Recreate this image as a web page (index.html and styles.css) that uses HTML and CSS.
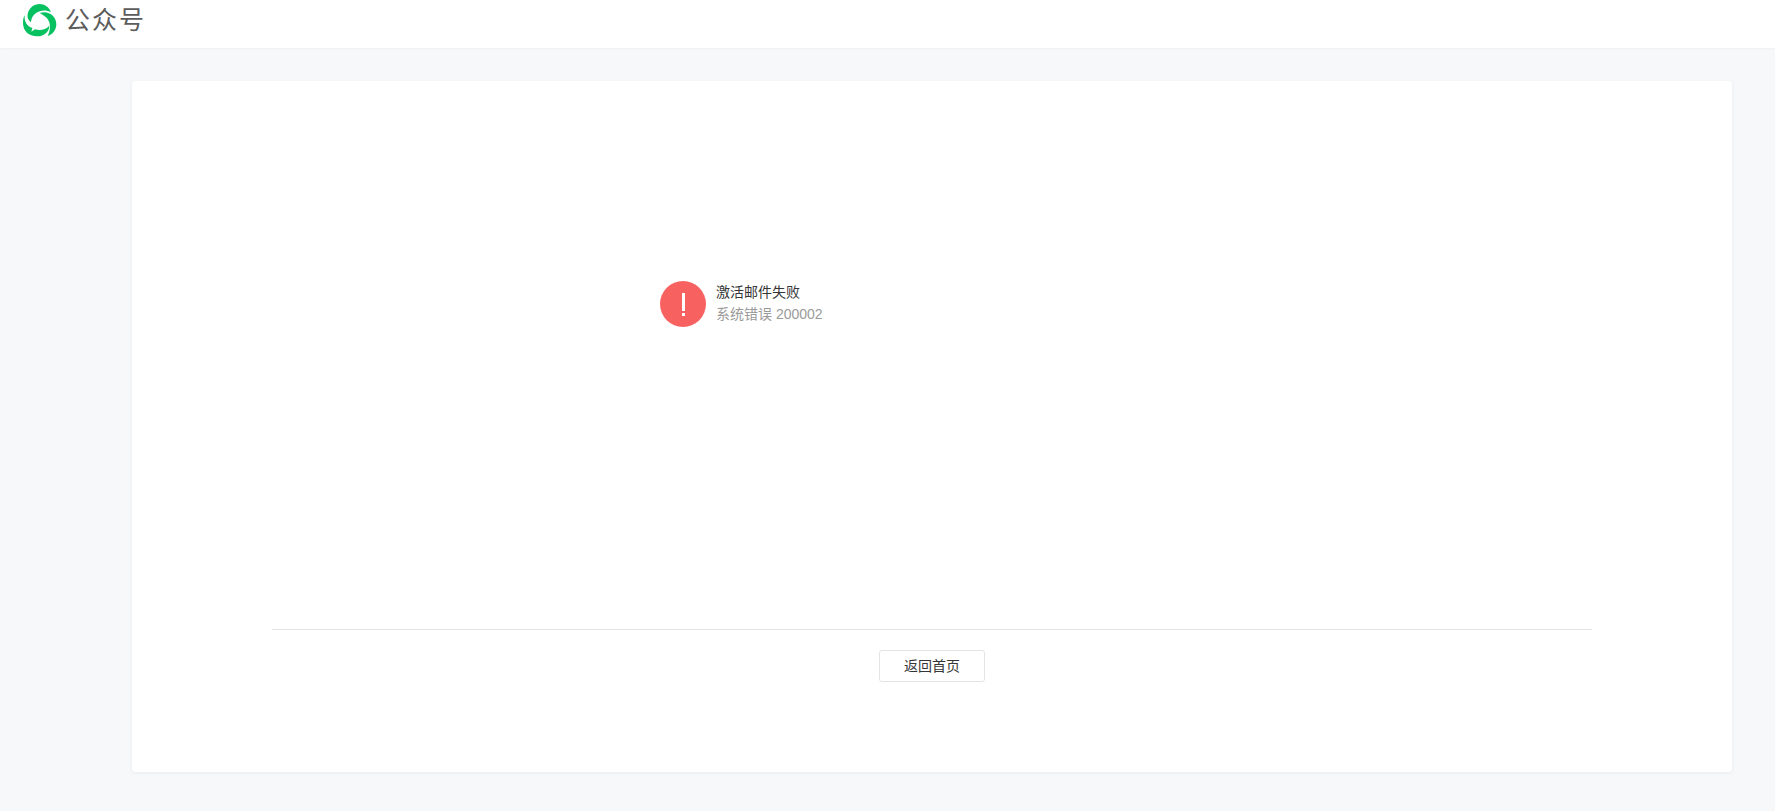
FILE: index.html
```
<!DOCTYPE html>
<html lang="zh-CN">
<head>
    <meta charset="UTF-8">
    <title>公众号</title>
    <link rel="stylesheet" href="styles.css">
</head>
<body>
<header class="head">
    <a class="logo" href="#">
        <svg class="logo_icon" viewBox="0 0 102 99">
            <path d="M24 55C15 49 12 39 14 30C18 12 32 0 50 0C65 0 78 9 84 24C74 19 62 18 53 21C36 25 25 38 24 55Z"/>
            <path d="M50 27C76 18 100 36 100 61C100 77 90 91 74 96C84 77 85 48 64 36C60 33 56 30 50 27Z"/>
            <path d="M5 34C3 53 13 68 28 72L25 83L36 76C53 80 68 77 79 65C79 85 61 97 42 97C18 97 0 81 0 57C0 48 1 41 5 34Z"/>
        </svg>
        <span class="logo_text">公众号</span>
    </a>
</header>
<main class="main">
    <div class="msg">
        <svg class="msg_icon" viewBox="0 0 46 46">
            <circle cx="23" cy="23" r="23" fill="#f76260"/>
            <path d="M22 12h3v18h-3zM22 32h3v3h-3z" fill="#fff"/>
        </svg>
        <div class="msg_content">
            <h4 class="msg_title">激活邮件失败</h4>
            <p class="msg_desc">系统错误 200002</p>
        </div>
    </div>
    <div class="tool_bar">
        <a class="btn" href="#">返回首页</a>
    </div>
</main>
</body>
</html>
```

FILE: styles.css
```
* {
  box-sizing: border-box;
  margin: 0;
  padding: 0;
}
body {
  min-height: 811px;
  background-color: #f6f8f9;
  color: #353535;
  font-family: "Liberation Sans", "Noto Sans CJK SC", sans-serif;
  font-size: 14px;
  line-height: 22px;
}
a {
  color: inherit;
  text-decoration: none;
}
.head {
  height: 48px;
  padding: 4px 0 0 23px;
  background-color: #fff;
  box-shadow: 0 1px 2px rgba(0, 0, 0, 0.04);
}
.logo {
  display: flex;
  gap: 8px;
}
.logo_icon {
  width: 34px;
  height: 33px;
  fill: #07c160;
}
.logo_text {
  color: #5c5c5c;
  font-size: 25px;
  line-height: 32px;
  letter-spacing: 2px;
}
.main {
  width: 1600px;
  height: 691px;
  margin: 33px 0 0 132px;
  padding: 200px 140px 0;
  background-color: #fff;
  border-radius: 4px;
  box-shadow: 0 1px 4px rgba(0, 0, 0, 0.06);
}
.msg {
  display: flex;
  gap: 10px;
  height: 348px;
  padding-left: 388px;
}
.msg_icon {
  width: 46px;
  height: 46px;
}
.msg_title {
  font-size: 14px;
  font-weight: 400;
}
.msg_desc {
  color: #9a9a9a;
}
.tool_bar {
  padding-top: 20px;
  border-top: 1px solid #e4e4e4;
  text-align: center;
}
.btn {
  display: inline-block;
  width: 106px;
  height: 32px;
  border: 1px solid #e4e4e4;
  border-radius: 3px;
  line-height: 30px;
}
```
